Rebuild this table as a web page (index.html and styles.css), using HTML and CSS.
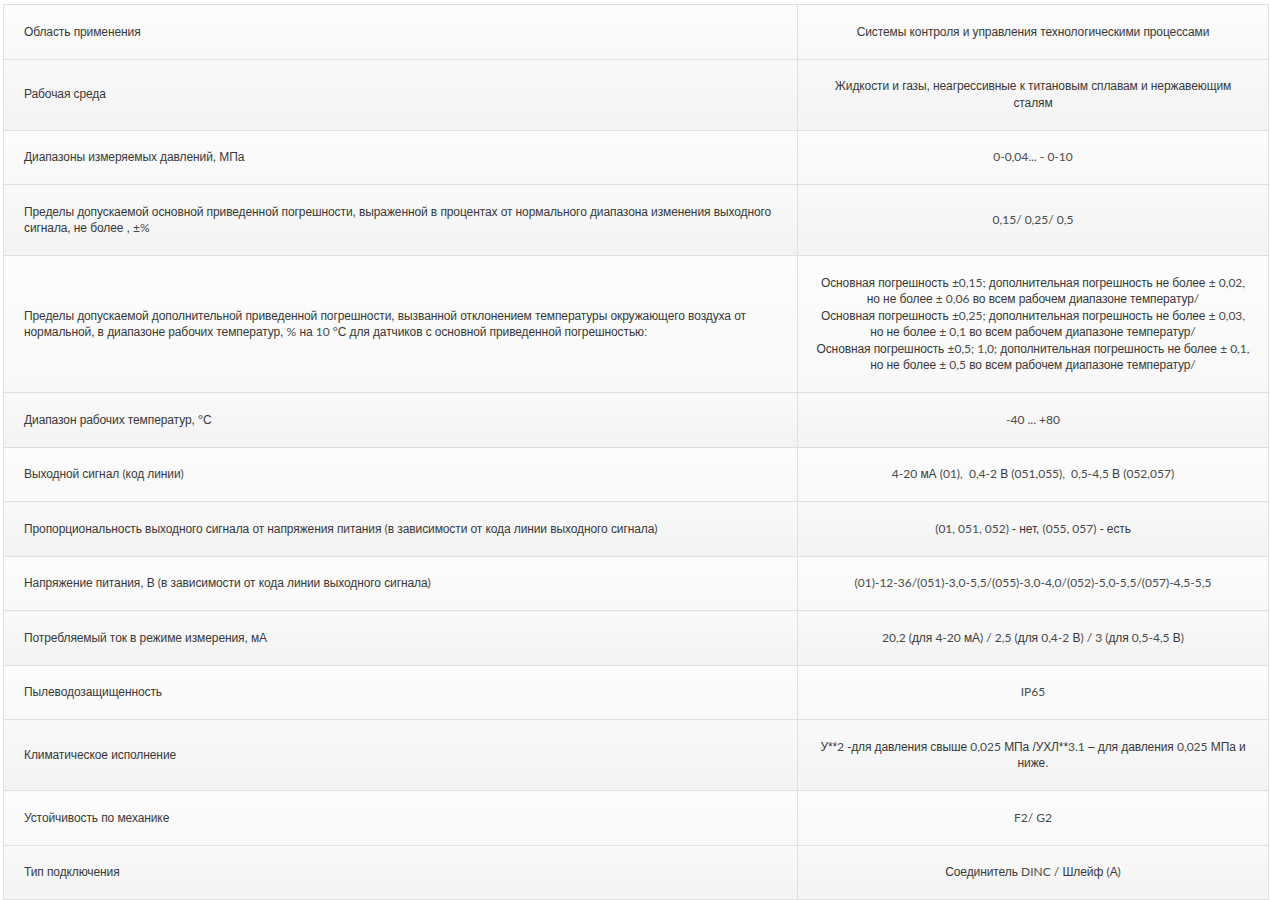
FILE: index.html
```html
<!doctype html>
<html lang="ru">
<head>
  <meta charset="UTF-8">
  <title>Технические характеристики</title>
  <link rel="stylesheet" href="styles.css">
</head>
<body>

<table class="specs">
  <tr>
    <td>Область применения</td>
    <td>Системы контроля и управления технологическими процессами</td>
  </tr>
  <tr>
    <td>Рабочая среда</td>
    <td>Жидкости и газы, неагрессивные к титановым сплавам и нержавеющим сталям</td>
  </tr>
  <tr>
    <td>Диапазоны измеряемых давлений, МПа</td>
    <td><span class="n">0-0,04... - 0-10</span></td>
  </tr>
  <tr>
    <td>Пределы допускаемой основной приведенной погрешности, выраженной в процентах от нормального диапазона изменения выходного сигнала, не более , <span class="n">±%</span></td>
    <td><span class="n">0,15/ 0,25/ 0,5</span></td>
  </tr>
  <tr>
    <td>Пределы допускаемой дополнительной приведенной погрешности, вызванной отклонением температуры окружающего воздуха от нормальной, в диапазоне рабочих температур, <span class="n">%</span> на <span class="n">10 °</span>С для датчиков с основной приведенной погрешностью:</td>
    <td>Основная погрешность <span class="n">±0,15;</span> дополнительная погрешность не более <span class="n">± 0,02,</span> но не более <span class="n">± 0,06</span> во всем рабочем диапазоне температур<span class="n">/</span><br>Основная погрешность <span class="n">±0,25;</span> дополнительная погрешность не более <span class="n">± 0,03,</span> но не более <span class="n">± 0,1</span> во всем рабочем диапазоне температур<span class="n">/</span><br>Основная погрешность <span class="n">±0,5; 1,0;</span> дополнительная погрешность не более <span class="n">± 0,1,</span> но не более <span class="n">± 0,5</span> во всем рабочем диапазоне температур<span class="n">/</span></td>
  </tr>
  <tr>
    <td>Диапазон рабочих температур, <span class="n">°</span>С</td>
    <td><span class="n">-40 ... +80</span></td>
  </tr>
  <tr>
    <td>Выходной сигнал <span class="n">(</span>код линии<span class="n">)</span></td>
    <td><span class="n">4-20</span> мА <span class="n">(01),&nbsp; 0,4-2</span> В <span class="n">(051,055),&nbsp; 0,5-4,5</span> В <span class="n">(052,057)</span></td>
  </tr>
  <tr>
    <td>Пропорциональность выходного сигнала от напряжения питания <span class="n">(</span>в зависимости от кода линии выходного сигнала<span class="n">)</span></td>
    <td><span class="n">(01, 051, 052)</span> - нет, <span class="n">(055, 057)</span> - есть</td>
  </tr>
  <tr>
    <td>Напряжение питания, В <span class="n">(</span>в зависимости от кода линии выходного сигнала<span class="n">)</span></td>
    <td><span class="n">(01)-12-36/(051)-3,0-5,5/(055)-3,0-4,0/(052)-5,0-5,5/(057)-4,5-5,5</span></td>
  </tr>
  <tr>
    <td>Потребляемый ток в режиме измерения, мА</td>
    <td><span class="n">20,2 (</span>для <span class="n">4-20</span> мА<span class="n">) / 2,5 (</span>для <span class="n">0,4-2</span> В<span class="n">) / 3 (</span>для <span class="n">0,5-4,5</span> В<span class="n">)</span></td>
  </tr>
  <tr>
    <td>Пылеводозащищенность</td>
    <td><span class="n">IP65</span></td>
  </tr>
  <tr>
    <td>Климатическое исполнение</td>
    <td>У**<span class="n">2</span> -для давления свыше <span class="n">0,025</span> МПа /УХЛ**<span class="n">3.1</span> – для давления <span class="n">0,025</span> МПа и ниже.</td>
  </tr>
  <tr>
    <td>Устойчивость по механике</td>
    <td><span class="n">F2/ G2</span></td>
  </tr>
  <tr>
    <td>Тип подключения</td>
    <td>Соединитель <span class="n">DINC /</span> Шлейф <span class="n">(</span>А<span class="n">)</span></td>
  </tr>
</table>

</body>
</html>
```

FILE: styles.css
```css
body {
  margin: 4px 1px 0 3px;
  background: #fff;
  font-family: 'Liberation Sans', arial, sans-serif;
  font-size: 12px;
  line-height: 16.5px;
  letter-spacing: -0.1px;
  color: #383838;
}

.n {
  font-family: 'Lato', sans-serif;
  letter-spacing: 0;
  color: #4a4a4a;
}

.specs {
  width: 100%;
  border-collapse: collapse;
  border: 1px solid #d0d0d0;
}

.specs td {
  padding: 18.5px 20px;
  border: 1px solid #e0e0e0;
  vertical-align: middle;
  background: linear-gradient(#fcfcfc, #f8f8f8);
}

.specs tr:nth-child(even) td {
  background: linear-gradient(#f9f9f9, #f3f3f3);
}

.specs td:first-child {
  width: 753px;
  text-align: left;
}

.specs td:last-child {
  text-align: center;
  padding-left: 18px;
  padding-right: 18px;
}
```
